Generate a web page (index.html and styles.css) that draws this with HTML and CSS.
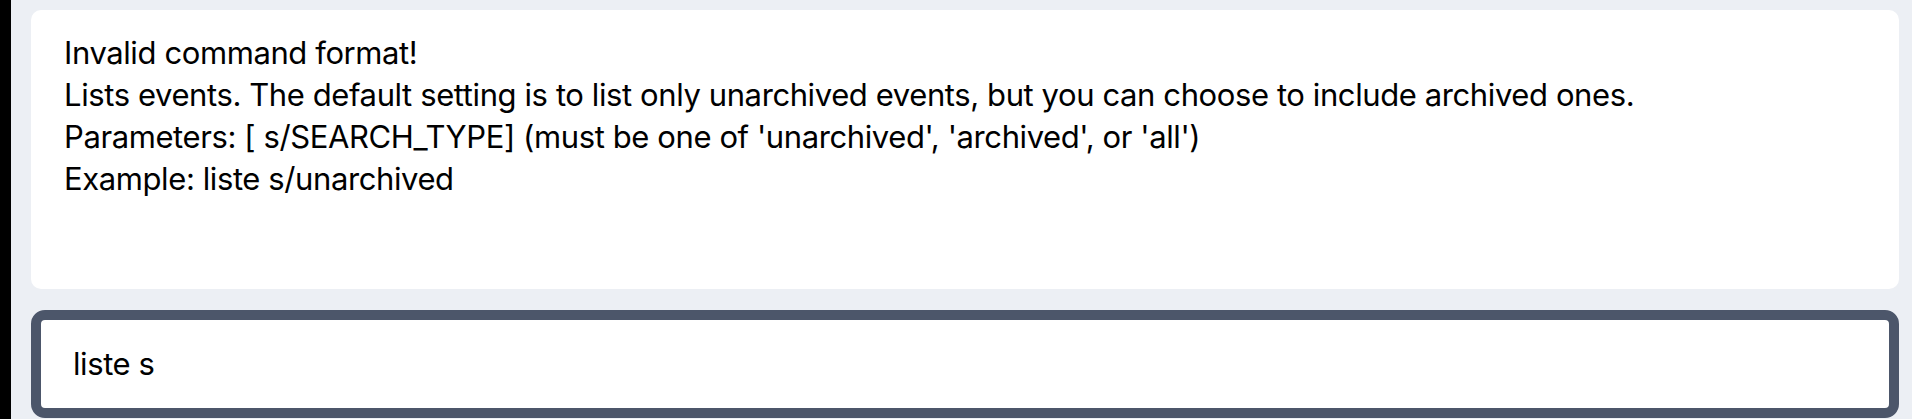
FILE: index.html
```html
<!DOCTYPE html>
<html>
<head>
<meta charset="utf-8">
<link rel="stylesheet" href="styles.css">
</head>
<body>
<div class="app">
  <div class="edge"></div>
  <main class="main">
    <section class="result">
      <p class="line">Invalid command format!</p>
      <p class="line">Lists events. The default setting is to list only unarchived events, but you can choose to include archived ones.</p>
      <p class="line">Parameters: [ s/SEARCH_TYPE] (must be one of 'unarchived', 'archived', or 'all')</p>
      <p class="line">Example: liste s/unarchived</p>
    </section>
    <div class="command">
      <span class="command-text">liste s</span>
    </div>
  </main>
</div>
</body>
</html>
```
FILE: styles.css
```css
html, body {
  margin: 0;
  padding: 0;
  height: 100%;
  background: #eceff4;
}
.app {
  display: flex;
  height: 419px;
  overflow: hidden;
}
.edge {
  width: 11px;
  flex: none;
  background: #000;
}
.main {
  flex: 1;
  display: flex;
  flex-direction: column;
  gap: 21px;
  padding: 10px 13px 0 20px;
}
.result {
  background: #fff;
  border-radius: 10px;
  height: 279px;
  box-sizing: border-box;
  padding: 22px 33px 0 33px;
  font-family: Inter, "Noto Sans", sans-serif;
  font-size: 31px;
  letter-spacing: -0.4px;
  color: #000;
}
.line {
  margin: 0;
  line-height: 42px;
}
.command {
  height: 108px;
  box-sizing: border-box;
  border: 10px solid #4c566a;
  border-radius: 14px;
  background: #fff;
  display: flex;
  align-items: center;
  padding: 0 32px;
}
.command-text {
  font-family: Inter, "Noto Sans", sans-serif;
  font-size: 31px;
  letter-spacing: -0.4px;
  line-height: 42px;
  color: #000;
}
```
